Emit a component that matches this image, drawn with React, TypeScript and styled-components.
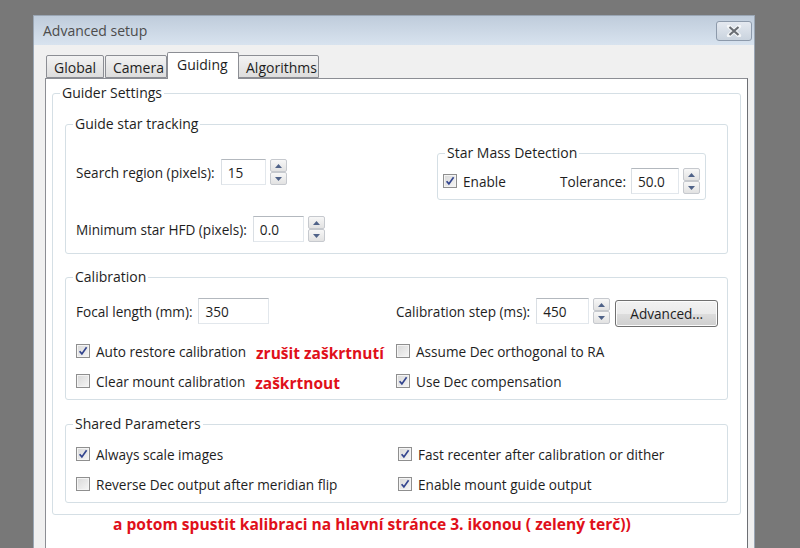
import React from 'react';
import styled, { createGlobalStyle } from 'styled-components';

const GlobalStyle = createGlobalStyle`
  html, body {
    margin: 0;
    padding: 0;
    background: #787878;
  }
  body {
    font-family: "Open Sans", "Noto Sans", sans-serif;
    font-size: 13.6px;
    color: #1e1e1e;
  }
  * { box-sizing: border-box; }
`;

const Screen = styled.div`
  width: 800px;
  height: 548px;
  overflow: hidden;
  padding: 15px 0 0 33px;
`;

const Window = styled.div`
  width: 722px;
  height: 533px;
  display: flex;
  flex-direction: column;
  background: #f0f0f0;
  border: 1px solid #9aa6b4;
  border-bottom: none;
`;

const TitleBar = styled.div`
  height: 29px;
  flex-shrink: 0;
  display: flex;
  align-items: center;
  justify-content: space-between;
  padding: 0 2px 0 9px;
  background: linear-gradient(#bfccdb, #d8e3ef);
`;

const Title = styled.span`
  color: #4c4c4c;
  font-size: 14px;
`;

const CloseButton = styled.div`
  width: 36px;
  height: 20px;
  border: 1px solid #8d9aab;
  border-radius: 3px;
  background: linear-gradient(#e4e9f0, #c9d3de);
  display: flex;
  align-items: center;
  justify-content: center;
`;

const Body = styled.div`
  flex: 1;
  display: flex;
  flex-direction: column;
  padding: 7px 6px 0 11px;
`;

const TabRow = styled.div`
  display: flex;
  align-items: flex-end;
  height: 26px;
  padding-left: 1px;
  position: relative;
  z-index: 1;
`;

const Tab = styled.div<{ $active?: boolean; $w: number }>`
  width: ${(p) => p.$w}px;
  height: ${(p) => (p.$active ? 27 : 23)}px;
  margin: ${(p) => (p.$active ? '0 -1px -1px -1px' : '0 1px 0 0')};
  padding: ${(p) => (p.$active ? '2px 0 0 9px' : '2px 0 0 7px')};
  border: 1px solid #8c8e94;
  border-bottom: ${(p) => (p.$active ? 'none' : '1px solid #8c8e94')};
  border-radius: 2px 2px 0 0;
  background: ${(p) => (p.$active ? '#fff' : 'linear-gradient(#f3f3f3, #dddddd)')};
  font-size: 14px;
  line-height: 20px;
`;

const Panel = styled.div`
  flex: 1;
  background: #fff;
  border: 1px solid #8c8e94;
  border-right-color: #6d6f74;
  border-bottom: none;
  padding: 6px 6px 0 6px;
`;

const Group = styled.fieldset<{ $pad: number; $top: number; $bottom: number; $mt?: number }>`
  margin: ${(p) => p.$mt ?? 0}px 0 0 0;
  padding: ${(p) => p.$top}px ${(p) => p.$pad}px ${(p) => p.$bottom}px ${(p) => p.$pad}px;
  border: 1px solid #d5dfe5;
  border-radius: 3px;
  min-width: 0;
`;

const Legend = styled.legend<{ $pad: number }>`
  margin-left: ${(p) => 7 - p.$pad}px;
  padding: 0 2px;
  line-height: 16px;
  font-size: 14px;
`;

const TrackingLayout = styled.div`
  display: flex;
  align-items: flex-start;
  margin-top: 13px;
`;

const LeftColumn = styled.div`
  width: 361px;
  padding-top: 14px;
  display: flex;
  flex-direction: column;
  gap: 31px;
`;

const Field = styled.div`
  display: flex;
  align-items: center;
  height: 26px;
`;

const Label = styled.span`
  white-space: nowrap;
  margin-right: 6px;
`;

const Input = styled.div<{ $w: number }>`
  width: ${(p) => p.$w}px;
  height: 26px;
  border: 1px solid #e2e7ec;
  border-top-color: #b3b8be;
  border-left-color: #dadfe4;
  padding-left: 6px;
  display: flex;
  align-items: center;
  background: #fff;
`;

const Spinner = styled.div`
  width: 17px;
  height: 26px;
  margin-left: 4px;
  display: flex;
  flex-direction: column;
`;

const SpinButton = styled.div`
  flex: 1;
  border: 1px solid #c6c9ce;
  border-radius: 2px;
  background: linear-gradient(#f7f7f7, #e2e2e2);
  display: flex;
  align-items: center;
  justify-content: center;
`;

const MassRow = styled.div`
  display: flex;
  align-items: center;
  margin-top: 7px;
`;

const TolLabel = styled.span`
  margin-left: auto;
  margin-right: 5px;
`;

const Grid = styled.div<{ $col: number; $mt: number }>`
  display: grid;
  grid-template-columns: ${(p) => p.$col}px 1fr;
  margin-top: ${(p) => p.$mt}px;
  row-gap: 10px;
`;

const CheckRow = styled.div`
  display: flex;
  align-items: center;
  height: 20px;
  white-space: nowrap;
`;

const Box = styled.span`
  width: 14px;
  height: 14px;
  flex-shrink: 0;
  border: 1px solid #8f8f8f;
  box-shadow: inset 0 0 0 1px #f4f4f4;
  background: linear-gradient(135deg, #d8d8d8, #f6f6f6);
  display: flex;
  align-items: center;
  justify-content: center;
  margin-right: 6px;
`;

const Note = styled.span`
  color: #e0101a;
  font-weight: 700;
  font-size: 15.5px;
  margin: 3px 0 0 10px;
`;

const Button = styled.div`
  width: 103px;
  height: 27px;
  margin: 2px 0 -2px 5px;
  border: 1px solid #707070;
  border-radius: 3px;
  background: linear-gradient(#f2f2f2 0%, #ebebeb 50%, #dddddd 51%, #cfcfcf 100%);
  box-shadow: inset 0 0 0 1px #fcfcfc;
  display: flex;
  align-items: center;
  justify-content: center;
`;

const FirstRow = styled.div`
  grid-column: 1 / -1;
  display: grid;
  grid-template-columns: 320px 1fr;
  margin-bottom: 7px;
`;

const Footer = styled.div`
  color: #e0101a;
  font-weight: 700;
  font-size: 15.6px;
  line-height: 18px;
  padding: 0 0 0 61px;
`;

const Check = ({ checked, children }: { checked?: boolean; children: React.ReactNode }) => (
  <CheckRow>
    <Box>
      {checked && (
        <svg width="10" height="10" viewBox="0 0 10 10">
          <path d="M1.6 5.2 L3.9 7.9 L8.6 1.3" stroke="#33458f" strokeWidth="1.7" fill="none" />
        </svg>
      )}
    </Box>
    {children}
  </CheckRow>
);

const Spin = () => (
  <Spinner>
    <SpinButton>
      <svg width="7" height="4" viewBox="0 0 7 4">
        <path d="M0 4 L3.5 0 L7 4 Z" fill="#4f6288" />
      </svg>
    </SpinButton>
    <SpinButton>
      <svg width="7" height="4" viewBox="0 0 7 4">
        <path d="M0 0 L3.5 4 L7 0 Z" fill="#4f6288" />
      </svg>
    </SpinButton>
  </Spinner>
);

export default function App() {
  return (
    <>
      <GlobalStyle />
      <Screen>
        <Window>
          <TitleBar>
            <Title>Advanced setup</Title>
            <CloseButton>
              <svg width="16" height="12" viewBox="0 0 16 12">
                <path d="M3 1.5 L13 10.5 M13 1.5 L3 10.5" stroke="#f4f6f8" strokeWidth="4.2" strokeLinecap="round" />
                <path d="M3.5 2 L12.5 10 M12.5 2 L3.5 10" stroke="#6a6e74" strokeWidth="2.2" />
              </svg>
            </CloseButton>
          </TitleBar>
          <Body>
            <TabRow>
              <Tab $w={58}>Global</Tab>
              <Tab $w={62}>Camera</Tab>
              <Tab $w={72} $active>Guiding</Tab>
              <Tab $w={81}>Algorithms</Tab>
            </TabRow>
            <Panel>
              <Group $pad={12} $top={15} $bottom={11}>
                <Legend $pad={12}>Guider Settings</Legend>

                <Group $pad={10} $top={0} $bottom={11}>
                  <Legend $pad={10}>Guide star tracking</Legend>
                  <TrackingLayout>
                    <LeftColumn>
                      <Field>
                        <Label>Search region (pixels):</Label>
                        <Input $w={45}>15</Input>
                        <Spin />
                      </Field>
                      <Field>
                        <Label>Minimum star HFD (pixels):</Label>
                        <Input $w={51}>0.0</Input>
                        <Spin />
                      </Field>
                    </LeftColumn>
                    <Group $pad={5} $top={0} $bottom={5} style={{ width: 269 }}>
                      <Legend $pad={5}>Star Mass Detection</Legend>
                      <MassRow>
                        <Check checked>Enable</Check>
                        <TolLabel>Tolerance:</TolLabel>
                        <Input $w={48}>50.0</Input>
                        <Spin />
                      </MassRow>
                    </Group>
                  </TrackingLayout>
                </Group>

                <Group $pad={10} $top={0} $bottom={8} $mt={15}>
                  <Legend $pad={10}>Calibration</Legend>
                  <Grid $col={320} $mt={13}>
                    <FirstRow>
                      <Field>
                        <Label>Focal length (mm):</Label>
                        <Input $w={71}>350</Input>
                      </Field>
                      <Field>
                        <Label>Calibration step (ms):</Label>
                        <Input $w={53}>450</Input>
                        <Spin />
                        <Button>Advanced...</Button>
                      </Field>
                    </FirstRow>
                    <CheckRow>
                      <Check checked>Auto restore calibration</Check>
                      <Note>zrušit zaškrtnutí</Note>
                    </CheckRow>
                    <Check>Assume Dec orthogonal to RA</Check>
                    <CheckRow>
                      <Check>Clear mount calibration</Check>
                      <Note>zaškrtnout</Note>
                    </CheckRow>
                    <Check checked>Use Dec compensation</Check>
                  </Grid>
                </Group>

                <Group $pad={10} $top={0} $bottom={8} $mt={16}>
                  <Legend $pad={10}>Shared Parameters</Legend>
                  <Grid $col={322} $mt={12}>
                    <Check checked>Always scale images</Check>
                    <Check checked>Fast recenter after calibration or dither</Check>
                    <Check>Reverse Dec output after meridian flip</Check>
                    <Check checked>Enable mount guide output</Check>
                  </Grid>
                </Group>
              </Group>
              <Footer>a potom spustit kalibraci na hlavní stránce 3. ikonou ( zelený terč))</Footer>
            </Panel>
          </Body>
        </Window>
      </Screen>
    </>
  );
}
